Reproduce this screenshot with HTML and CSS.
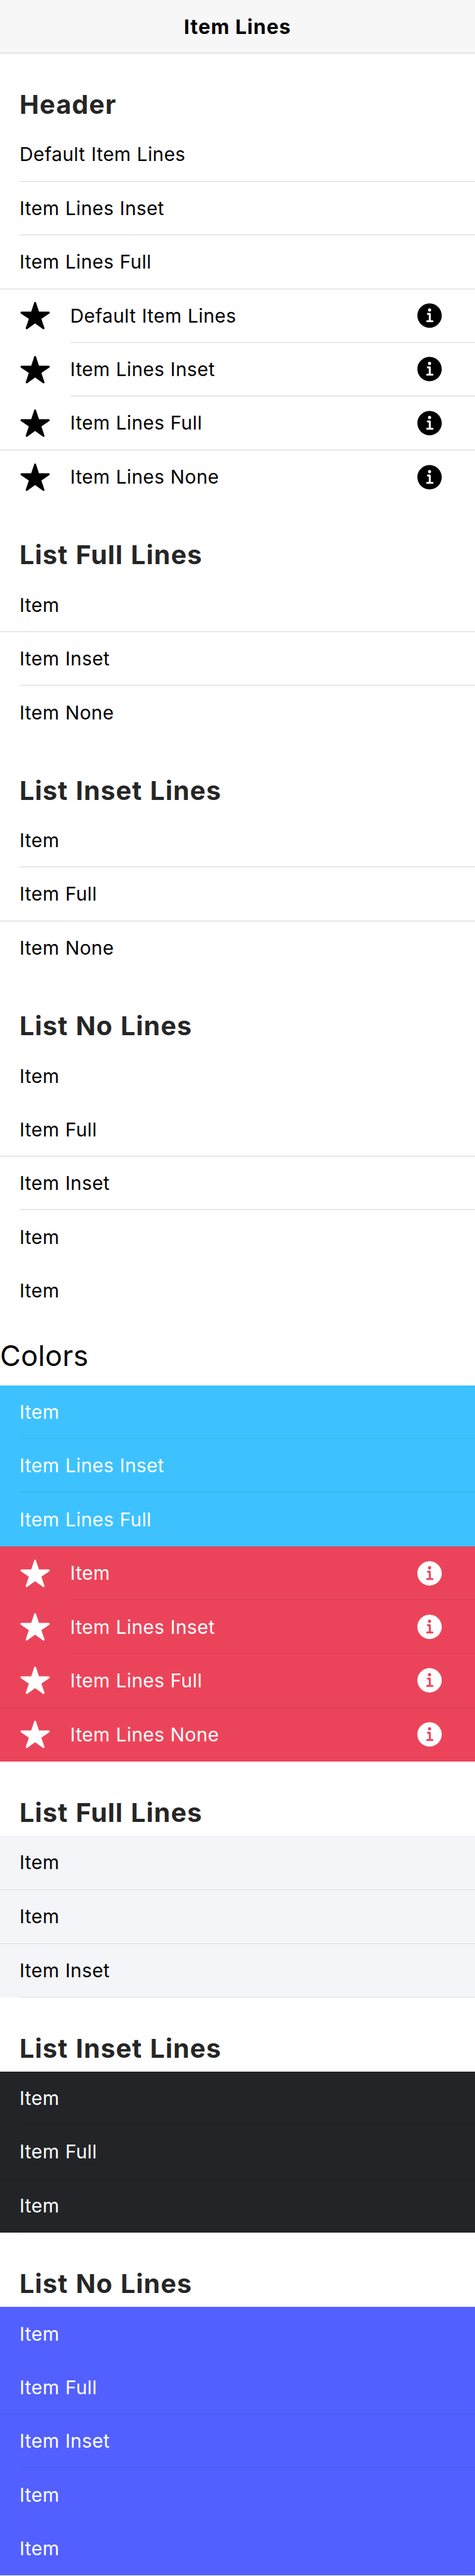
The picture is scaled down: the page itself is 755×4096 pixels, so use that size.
FILE: index.html
```html
<!DOCTYPE html>
<html lang="en">
<head>
<meta charset="utf-8">
<title>Item Lines</title>
<link rel="stylesheet" href="styles.css">
</head>
<body>
<svg width="0" height="0" class="sprite" aria-hidden="true">
  <symbol id="star" viewBox="0 0 512 512"><path d="M394 480a16 16 0 01-9.39-3L256 383.76 127.39 477a16 16 0 01-24.55-18.08L153 310.35 23 221.2a16 16 0 019-29.2h160.38l48.4-148.95a16 16 0 0130.44 0l48.4 149H480a16 16 0 019.05 29.2L359 310.35l50.13 148.53A16 16 0 01394 480z"/></symbol>
  <symbol id="info" viewBox="0 0 512 512"><path d="M256 56C145.72 56 56 145.72 56 256s89.72 200 200 200 200-89.72 200-200S366.28 56 256 56zm0 82a26 26 0 11-26 26 26 26 0 0126-26zm48 226h-88a16 16 0 010-32h28v-88h-16a16 16 0 010-32h32a16 16 0 0116 16v104h28a16 16 0 010 32z"/></symbol>
</svg>
<header class="toolbar"><h1 class="title">Item Lines</h1></header>
<main>
  <h2 class="list-header">Header</h2>
  <ul class="list">
    <li class="item inset"><div class="inner">Default Item Lines</div></li>
    <li class="item inset"><div class="inner">Item Lines Inset</div></li>
    <li class="item full"><div class="inner">Item Lines Full</div></li>
    <li class="item inset"><svg class="icon star"><use href="#star"/></svg><div class="inner">Default Item Lines<svg class="icon info"><use href="#info"/></svg></div></li>
    <li class="item inset"><svg class="icon star"><use href="#star"/></svg><div class="inner">Item Lines Inset<svg class="icon info"><use href="#info"/></svg></div></li>
    <li class="item full"><svg class="icon star"><use href="#star"/></svg><div class="inner">Item Lines Full<svg class="icon info"><use href="#info"/></svg></div></li>
    <li class="item"><svg class="icon star"><use href="#star"/></svg><div class="inner">Item Lines None<svg class="icon info"><use href="#info"/></svg></div></li>
  </ul>

  <h2 class="list-header">List Full Lines</h2>
  <ul class="list">
    <li class="item full"><div class="inner">Item</div></li>
    <li class="item inset"><div class="inner">Item Inset</div></li>
    <li class="item"><div class="inner">Item None</div></li>
  </ul>

  <h2 class="list-header">List Inset Lines</h2>
  <ul class="list">
    <li class="item inset"><div class="inner">Item</div></li>
    <li class="item full"><div class="inner">Item Full</div></li>
    <li class="item"><div class="inner">Item None</div></li>
  </ul>

  <h2 class="list-header">List No Lines</h2>
  <ul class="list">
    <li class="item"><div class="inner">Item</div></li>
    <li class="item full"><div class="inner">Item Full</div></li>
    <li class="item inset"><div class="inner">Item Inset</div></li>
    <li class="item"><div class="inner">Item</div></li>
    <li class="item"><div class="inner">Item</div></li>
  </ul>

  <h2 class="colors">Colors</h2>
  <ul class="list secondary">
    <li class="item inset"><div class="inner">Item</div></li>
    <li class="item inset"><div class="inner">Item Lines Inset</div></li>
    <li class="item full"><div class="inner">Item Lines Full</div></li>
  </ul>
  <ul class="list danger">
    <li class="item inset"><svg class="icon star"><use href="#star"/></svg><div class="inner">Item<svg class="icon info"><use href="#info"/></svg></div></li>
    <li class="item inset"><svg class="icon star"><use href="#star"/></svg><div class="inner">Item Lines Inset<svg class="icon info"><use href="#info"/></svg></div></li>
    <li class="item full"><svg class="icon star"><use href="#star"/></svg><div class="inner">Item Lines Full<svg class="icon info"><use href="#info"/></svg></div></li>
    <li class="item"><svg class="icon star"><use href="#star"/></svg><div class="inner">Item Lines None<svg class="icon info"><use href="#info"/></svg></div></li>
  </ul>

  <h2 class="list-header">List Full Lines</h2>
  <ul class="list light">
    <li class="item full"><div class="inner">Item</div></li>
    <li class="item full"><div class="inner">Item</div></li>
    <li class="item inset"><div class="inner">Item Inset</div></li>
  </ul>

  <h2 class="list-header">List Inset Lines</h2>
  <ul class="list dark">
    <li class="item inset"><div class="inner">Item</div></li>
    <li class="item full"><div class="inner">Item Full</div></li>
    <li class="item inset"><div class="inner">Item</div></li>
  </ul>

  <h2 class="list-header">List No Lines</h2>
  <ul class="list tertiary">
    <li class="item"><div class="inner">Item</div></li>
    <li class="item full"><div class="inner">Item Full</div></li>
    <li class="item inset"><div class="inner">Item Inset</div></li>
    <li class="item"><div class="inner">Item</div></li>
    <li class="item"><div class="inner">Item</div></li>
  </ul>
</main>
</body>
</html>
```
FILE: styles.css
```css
/* --u is one device pixel of the 3x phone layout */
:root {
  --u: 0.64555px;
  --line: #d4d4d6;
}

* {
  box-sizing: border-box;
}

body {
  margin: 0;
  background: #fff;
  color: #000;
  font-family: Inter, "Liberation Sans", sans-serif;
}

.sprite {
  display: none;
}

.toolbar {
  display: flex;
  align-items: center;
  justify-content: center;
  height: calc(var(--u) * 132);
  background: #f7f7f7;
  border-bottom: 1px solid var(--line);
}

.title {
  margin: 0;
  font-size: calc(var(--u) * 49.5);
  font-weight: 700;
  letter-spacing: calc(var(--u) * 1.6);
}

.list-header {
  height: calc(var(--u) * 183);
  margin: 0;
  padding: calc(var(--u) * 87) 0 0 calc(var(--u) * 48);
  color: #262626;
  font-size: calc(var(--u) * 64.2);
  font-weight: 700;
  letter-spacing: calc(var(--u) * 1.65);
  word-spacing: calc(var(--u) * 2);
  line-height: calc(var(--u) * 80);
}

.colors {
  height: calc(var(--u) * 168);
  margin: 0;
  padding-top: calc(var(--u) * 52);
  font-size: calc(var(--u) * 70);
  font-weight: 400;
  letter-spacing: calc(var(--u) * 0.4);
  line-height: calc(var(--u) * 86);
}

.list {
  margin: 0;
  padding: 0;
  list-style: none;
}

.item {
  display: flex;
  align-items: center;
  height: calc(var(--u) * 132);
  padding-left: calc(var(--u) * 48);
  font-size: calc(var(--u) * 46.5);
  letter-spacing: calc(var(--u) * 0.6);
  word-spacing: calc(var(--u) * 0.8);
}

.item.full {
  height: calc(var(--u) * 133);
  border-bottom: 1px solid var(--line);
}

.inner {
  display: flex;
  flex: 1;
  align-items: center;
  justify-content: space-between;
  height: 100%;
  padding-right: calc(var(--u) * 73);
}

.item.inset .inner {
  border-bottom: 1px solid var(--line);
}

.icon {
  flex: none;
  width: calc(var(--u) * 76.8);
  height: calc(var(--u) * 76.8);
  fill: currentColor;
}

.star {
  margin-right: calc(var(--u) * 48);
}

.secondary {
  --line: #39b3eb;
  background: #3dc2ff;
  color: #fff;
}

.danger {
  --line: #d53e52;
  background: #eb445a;
  color: #fff;
}

.light {
  --line: #dddee1;
  background: #f4f5f8;
}

.dark {
  --line: #1f2124;
  background: #222428;
  color: #fff;
}

.tertiary {
  --line: #4b58eb;
  background: #5260ff;
  color: #fff;
}
```
